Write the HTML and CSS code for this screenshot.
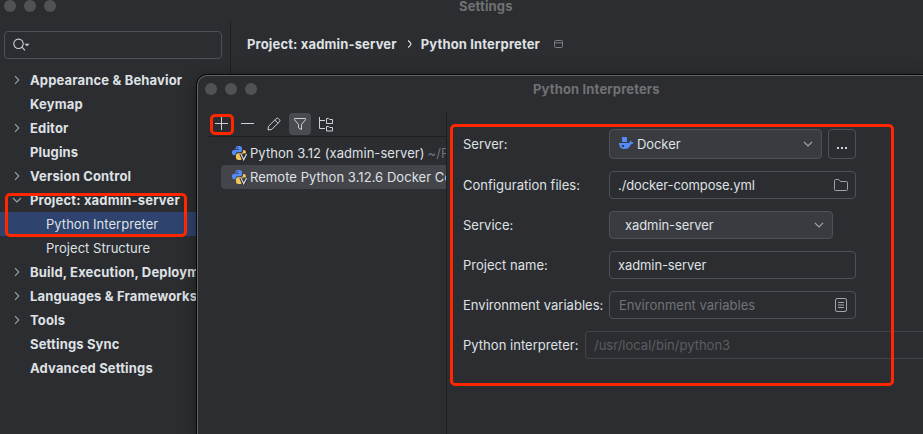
FILE: index.html
```html
<!DOCTYPE html>
<html lang="en">
<head>
<meta charset="utf-8">
<title>Settings</title>
<link rel="stylesheet" href="styles.css">
</head>
<body>
<svg class="defs" width="0" height="0">
  <symbol id="right" viewBox="0 0 16 16"><path d="M6 4.200 9.800 8 6 11.800" fill="none" stroke="currentColor" stroke-width="1.100"/></symbol>
  <symbol id="down" viewBox="0 0 16 16"><path d="M4 6 8 10 12 6" fill="none" stroke="currentColor" stroke-width="1.100"/></symbol>
  <symbol id="python" viewBox="0 0 16 16">
    <path d="M4.500 3Q4.500 1 7 1h1.500Q11 1 11 3v2.500Q11 7.300 9.200 7.300H6.500Q4.600 7.300 4.600 9v1.300H3.200Q1 10.300 1 7.500T3.300 4.700H8V4H4.500z" fill="#548af7"/>
    <circle cx="6.300" cy="2.700" r=".6" fill="#2b2d30"/>
    <path d="M12 5h.8Q15 5 15 8v.5h-3.200L10.500 14.500Q9.800 15 8.500 15H7.500Q5 15 5 13v-2.800Q5 8.300 7 8.300h2.500Q12 8.300 12 6.500z" fill="#f2c55c"/>
    <path d="M9.700 8.800 12.700 15 15.700 8.800" fill="none" stroke="#2b2d30" stroke-width="3"/>
    <path d="M9.900 9 12.700 14.700 15.500 9" fill="none" stroke="#ced0d6" stroke-width="1.300"/>
  </symbol>
</svg>
<div class="window">
  <header class="titlebar"><div class="lights"><i></i><i></i><i></i></div><span class="title main-title">Settings</span></header>
  <div class="body">
    <aside class="sidebar">
      <div class="search"><svg width="18" height="16" viewBox="0 0 18 16"><circle cx="6.500" cy="6.800" r="4.700" fill="none" stroke="#ced0d6" stroke-width="1.100"/><path d="M9.900 10.200 13 13.300" stroke="#ced0d6" stroke-width="1.100"/><path d="M12.500 6.800h5L15 9.300z" fill="#ced0d6"/></svg></div>
      <ul class="tree">
        <li><svg><use href="#right"/></svg><span>Appearance &amp; Behavior</span></li>
        <li><span class="leaf">Keymap</span></li>
        <li><svg><use href="#right"/></svg><span>Editor</span></li>
        <li><span class="leaf">Plugins</span></li>
        <li><svg><use href="#right"/></svg><span>Version Control</span></li>
        <li><svg><use href="#down"/></svg><span>Project: xadmin-server</span></li>
        <li class="child selected"><span>Python Interpreter</span></li>
        <li class="child"><span>Project Structure</span></li>
        <li><svg><use href="#right"/></svg><span>Build, Execution, Deployment</span></li>
        <li><svg><use href="#right"/></svg><span>Languages &amp; Frameworks</span></li>
        <li><svg><use href="#right"/></svg><span>Tools</span></li>
        <li><span class="leaf">Settings Sync</span></li>
        <li><span class="leaf">Advanced Settings</span></li>
      </ul>
    </aside>
    <main class="content">
      <div class="crumbs"><span>Project: xadmin-server</span><svg class="sep" width="6" height="10" viewBox="0 0 6 10"><path d="M1.200 1.500Q4 4 4 5T1.200 8.500" fill="none" stroke="#dfe1e5" stroke-width="1.200"/></svg><span>Python Interpreter</span><svg class="winicon" width="10" height="10" viewBox="0 0 10 10"><rect x=".5" y="1.500" width="8" height="7" rx="1" fill="none" stroke="#7b7e84"/><path d="M.5 3.800h8" stroke="#7b7e84"/></svg></div>
    </main>
  </div>
</div>

<section class="dialog">
  <header class="dialog-bar"><div class="lights"><i></i><i></i><i></i></div><span class="title dialog-title">Python Interpreters</span></header>
  <div class="dialog-body">
    <div class="list-pane">
      <div class="toolbar">
        <button><svg viewBox="0 0 16 16"><path d="M7.500 1v13M1 7.500h13" stroke="currentColor"/></svg></button>
        <button><svg viewBox="0 0 16 16"><path d="M1 7.500h13" stroke="currentColor"/></svg></button>
        <button><svg viewBox="0 0 16 16"><path d="M2 14 2.600 10.200 10.200 2.600Q11.300 1.500 12.400 2.600L13.400 3.600Q14.500 4.700 13.400 5.800L5.800 13.400zM8.800 4 12 7.200" fill="none" stroke="currentColor"/></svg></button>
        <button class="on"><svg viewBox="0 0 16 16"><path d="M2.500 2.500h11v1.200L9.500 8.500v5l-3-1.600V8.500L2.500 3.700z" fill="none" stroke="currentColor" stroke-linejoin="round"/></svg></button>
        <button><svg viewBox="0 0 16 16"><path d="M1.500 1v11.500H7M1.500 4.500H7M8.500 2.500h2l1 1h3v4h-6zM8.500 10.500h2l1 1h3v3.500h-6z" fill="none" stroke="currentColor" stroke-linejoin="round"/></svg></button>
      </div>
      <div class="item"><svg><use href="#python"/></svg><span>Python 3.12 (xadmin-server)</span><span class="path">~/Py</span></div>
      <div class="item active"><svg><use href="#python"/></svg><span>Remote Python 3.12.6 Docker Co</span></div>
    </div>
    <form class="form">
      <div class="row server"><label>Server:</label><div class="combo wide"><svg class="docker" viewBox="0 0 16 16"><path d="M4 1.500Q4 1 4.500 1h4Q9 1 9 1.500V6H4zM1 7h10.500Q11.300 5.500 12.300 4.500 13.500 5.200 13.500 6.300 14.700 6 15.500 6.500 14.800 8.300 12.700 8.500 11.500 13 6.500 13 1 13 1 7z" fill="#548af7"/><rect x="4" y="9" width="2" height="2" fill="#3a3b3f"/></svg><span>Docker</span><svg class="end"><use href="#down"/></svg></div><button type="button" class="more"><i></i><i></i><i></i></button></div>
      <div class="row"><label>Configuration files:</label><div class="field"><span class="value">./docker-compose.yml</span><svg class="end" viewBox="0 0 16 16"><path d="M1.500 3.500Q1.500 2.500 2.500 2.500h3.200L7.500 4.500h6Q14.500 4.500 14.500 5.500v7Q14.500 13.500 13.500 13.500h-11Q1.500 13.500 1.500 12.500z" fill="none" stroke="currentColor"/></svg></div></div>
      <div class="row"><label>Service:</label><div class="combo service"><span>xadmin-server</span><svg class="end"><use href="#down"/></svg></div></div>
      <div class="row"><label>Project name:</label><div class="field"><span class="value">xadmin-server</span></div></div>
      <div class="row"><label>Environment variables:</label><div class="field"><span class="hint">Environment variables</span><svg class="end" viewBox="0 0 16 16"><rect x="2.500" y="1.500" width="11" height="13" rx="1.500" fill="none" stroke="currentColor"/><path d="M5 5.500h6M5 8h6M5 10.500h6" stroke="currentColor"/></svg></div></div>
      <div class="row"><label class="short">Python interpreter:</label><div class="field disabled"><span>/usr/local/bin/python3</span></div></div>
    </form>
  </div>
</section>
<div class="mark mark-tree"></div>
<div class="mark mark-add"></div>
<div class="mark mark-form"></div>
</body>
</html>
```
FILE: styles.css
```css
* { box-sizing: border-box; }
body { margin: 0; width: 923px; height: 434px; overflow: hidden; position: relative; background: #2b2d30; color: #dfe1e5; font: 13px/16px Inter, "Liberation Sans", sans-serif; white-space: nowrap; }
svg { width: 16px; height: 16px; flex: none; display: block; }
.defs { position: absolute; width: 0; height: 0; }
button { border: 0; padding: 0; background: none; color: inherit; font: inherit; }
i { display: block; }

.window { height: 434px; display: flex; flex-direction: column; }
.titlebar { height: 21px; display: flex; padding-left: 4px; }
.lights { display: flex; gap: 8px; height: 12px; }
.lights i { width: 12px; height: 12px; border-radius: 50%; background: #515254; }
.title { font-weight: 700; color: #707174; letter-spacing: .15px; }
.main-title { margin: -2px 0 0 403px; }
.body { flex: 1; display: flex; min-height: 0; }
.sidebar { width: 231px; flex: none; border-right: 1px solid #1e1f22; padding-top: 10px; overflow: hidden; }
.search { width: 218px; height: 28px; margin-left: 4px; border: 1px solid #4e5157; border-radius: 4px; display: flex; align-items: center; padding-left: 7px; }
.search svg { width: 18px; }
.tree { list-style: none; margin: 9px 0 0; padding: 0; font-weight: 700; letter-spacing: .16px; }
.tree li { height: 24px; display: flex; align-items: center; padding-left: 9px; }
.tree svg { color: #a0a3a8; margin-right: 5px; }
.tree .leaf { margin-left: 21px; }
.tree .child { padding-left: 46px; font-weight: 400; letter-spacing: .03px; }
.tree .selected { background: #2e436e; }
.crumbs { display: flex; align-items: center; padding: 15px 0 0 16px; font-weight: 700; letter-spacing: .15px; }
.crumbs .sep { width: 6px; height: 10px; margin: 0 8px 0 10px; }
.crumbs .winicon { width: 10px; height: 10px; margin-left: 14px; }

.dialog { position: absolute; left: 197px; top: 75px; width: 726px; height: 359px; overflow: hidden; background: #2b2d30; border: 1px solid #626366; border-right: 0; border-bottom: 0; border-radius: 10px 0 0 0; box-shadow: 0 0 0 1px #080809, 0 4px 18px rgba(0,0,0,.42); }
.dialog-bar { height: 36px; display: flex; padding: 7px 0 0 7px; }
.dialog-title { margin: -2px 0 0 276px; }
.dialog-body { display: flex; height: 322px; }
.list-pane { width: 249px; flex: none; border-right: 1px solid #1e1f22; overflow: hidden; }
.toolbar { height: 25px; margin-left: 11px; border-bottom: 1px solid #1e1f22; display: flex; gap: 4px; padding: 1px 0 0 2px; }
.toolbar button { width: 22px; height: 22px; border-radius: 4px; display: grid; place-items: center; color: #ced0d6; }
.toolbar .on { background: #494b50; }
.item { height: 24px; display: flex; align-items: center; margin-left: 23px; padding-left: 10px; border-radius: 4px 0 0 4px; letter-spacing: .05px; }
.toolbar + .item { margin-top: 4px; }
.item.active { background: #43454a; }
.item span { margin-left: 3px; }
.item .path { color: #6f737a; }

.form { flex: 1; min-width: 0; padding: 17px 0 0 16px; display: flex; flex-direction: column; gap: 12px; }
.row { height: 28px; display: flex; align-items: center; }
.row.server { height: 30px; }
.row label { width: 146px; flex: none; letter-spacing: .02px; }
.row label.short { width: 122px; }
.field, .combo { width: 247px; height: 28px; border: 1px solid #4e5157; border-radius: 4px; display: flex; align-items: center; padding: 0 6px 0 8px; }
.field .value { letter-spacing: -.1px; }
.combo { background: #393b40; letter-spacing: -.08px; }
.combo.wide { width: 213px; height: 30px; padding-right: 5px; }
.combo.wide span { margin-left: 3px; }
.combo.service { width: 224px; padding: 0 5px 0 15px; }
.end { margin-left: auto; color: #a0a3a8; }
.more { width: 28px; height: 30px; margin-left: 6px; border: 1px solid #4e5157; border-radius: 4px; display: flex; gap: 2px; justify-content: center; padding-top: 17px; }
.more i { width: 2px; height: 2px; background: #ced0d6; }
.hint { color: #6f737a; margin-left: 1px; }
.field.disabled { width: auto; flex: 1; border-color: #43454a; border-right: 0; border-radius: 4px 0 0 4px; color: #5a5d63; }

.mark { position: absolute; border: 3px solid #ff2600; border-radius: 5px; }
.mark-tree { left: 5px; top: 193px; width: 182px; height: 44px; }
.mark-add { left: 210px; top: 114px; width: 24px; height: 21px; }
.mark-form { left: 450px; top: 124px; width: 444px; height: 262px; }
```
